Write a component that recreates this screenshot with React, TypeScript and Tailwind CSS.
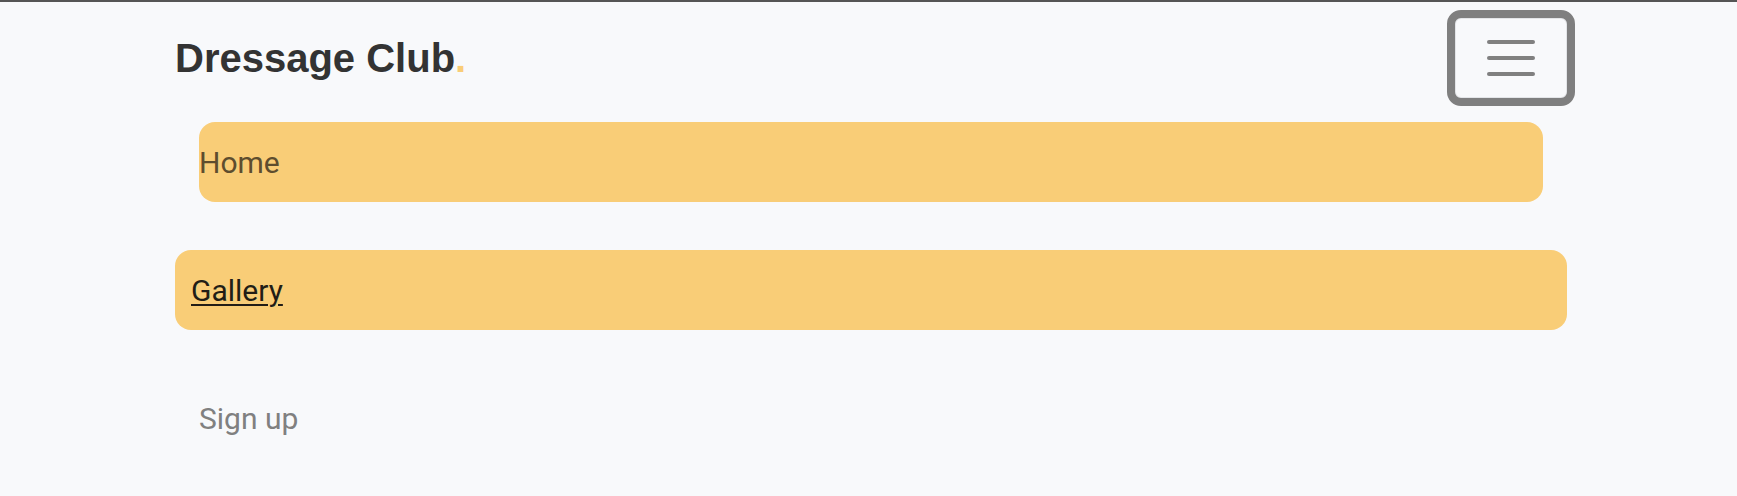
export default function App() {
  return (
    <div className="min-h-screen w-full border-t-2 border-[#555555] bg-[#f8f9fb] font-['Roboto','Liberation_Sans',sans-serif]">
      <div className="ml-[175px] w-[1392px] pt-4">
        {/* Header */}
        <header className="flex h-20 items-center justify-between">
          <a href="#" className="font-['Liberation_Sans',Arial,sans-serif] text-[40px] font-bold leading-none text-[#333333]">
            Dressage Club<span className="text-[#f9cd77]">.</span>
          </a>
          <button className="flex h-20 w-28 flex-col items-center justify-center gap-3 rounded-md border border-[#e3e5e8] outline-8 outline-[#7f7f7f]">
            <span className="block h-1 w-12 rounded-full bg-[#808080]" />
            <span className="block h-1 w-12 rounded-full bg-[#808080]" />
            <span className="block h-1 w-12 rounded-full bg-[#808080]" />
          </button>
        </header>

        {/* Nav */}
        <ul className="mt-6 flex flex-col gap-12 text-[30px]">
          <li>
            <a href="#" className="mx-6 flex h-20 items-center rounded-2xl bg-[#f9cd77] text-[#5e4d2e]">
              Home
            </a>
          </li>
          <li>
            <a href="#" className="flex h-20 items-center rounded-2xl bg-[#f9cd77] px-4 text-[#221d16] underline decoration-2 underline-offset-[3px]">
              Gallery
            </a>
          </li>
          <li>
            <a href="#" className="flex h-20 items-center px-6 text-[#808080]">
              Sign up
            </a>
          </li>
        </ul>
      </div>
    </div>
  );
}
